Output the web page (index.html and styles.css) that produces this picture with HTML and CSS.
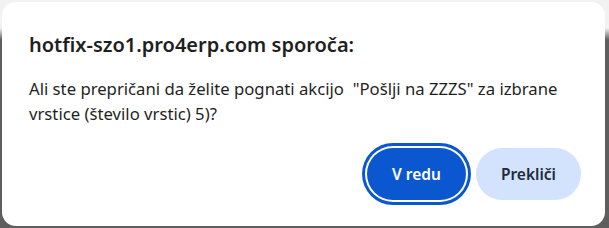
FILE: index.html
```html
<!DOCTYPE html>
<html lang="sl">
<head>
    <meta charset="UTF-8">
    <meta name="viewport" content="width=device-width, initial-scale=1.0">
    <title>hotfix-szo1.pro4erp.com sporoča</title>
    <link rel="stylesheet" href="styles.css">
</head>
<body>
    <div class="dialog">
        <h1 class="dialog-title">hotfix-szo1.pro4erp.com sporoča:</h1>
        <p class="dialog-message">Ali ste prepričani da želite pognati akcijo  "Pošlji na ZZZS" za izbrane vrstice (število vrstic) 5)?</p>
        <div class="dialog-buttons">
            <button class="btn btn-primary">V redu</button>
            <button class="btn btn-secondary">Prekliči</button>
        </div>
    </div>
</body>
</html>
```

FILE: styles.css
```css
body {
    font-family: 'Noto Sans', 'Open Sans', sans-serif;
    margin: 0;
    padding: 2px 4px 2px 2px;
    height: 228px;
    box-sizing: border-box;
    background: linear-gradient(to bottom, #f2f2f2 0, #f2f2f2 28px, #5e5e5e 40px, #5e5e5e 100%);
}
.dialog {
    height: 224px;
    box-sizing: border-box;
    background: #ffffff;
    border-radius: 14px;
    padding: 31px 24px 26px 27px;
    color: #1f1f1f;
}
.dialog-title {
    font-size: 20px;
    line-height: 24px;
    font-weight: 600;
    margin: 0 0 19px 0;
}
.dialog-message {
    font-size: 16.7px;
    line-height: 25px;
    margin: 0 0 22px 0;
    white-space: pre-wrap;
}
.dialog-buttons {
    display: flex;
    justify-content: flex-end;
    gap: 10px;
}
.btn {
    font-family: inherit;
    height: 52px;
    padding: 0 25px;
    font-size: 15.5px;
    font-weight: 600;
    border: none;
    border-radius: 26px;
    cursor: pointer;
}
.btn-primary {
    background-color: #0b57d0;
    color: #ffffff;
    box-shadow: 0 0 0 2px #ffffff, 0 0 0 5px #0b57d0;
}
.btn-secondary {
    background-color: #d3e3fd;
    color: #1f2a3a;
}
```
